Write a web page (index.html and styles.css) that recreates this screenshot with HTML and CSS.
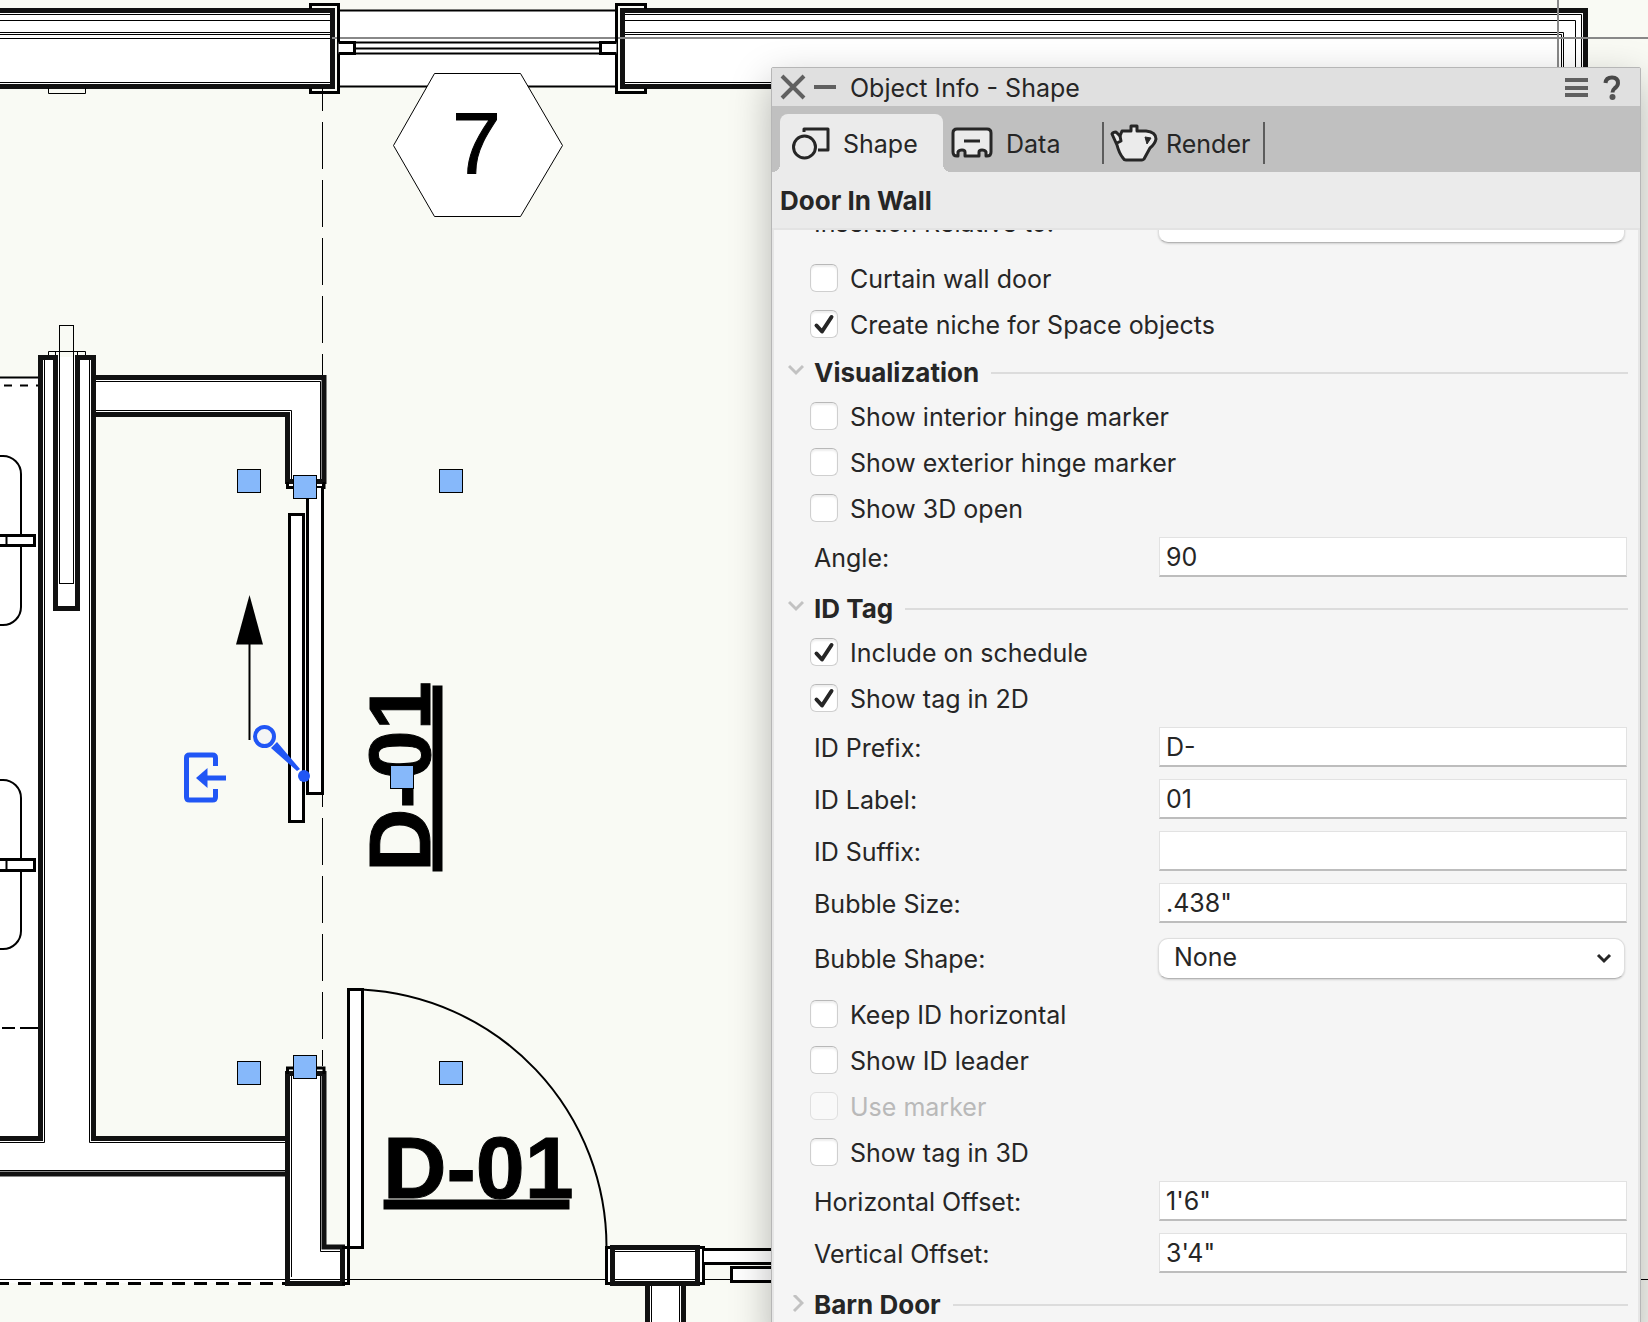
FILE: index.html
```html
<!DOCTYPE html>
<html lang="en">
<head>
<meta charset="utf-8">
<title>Object Info - Shape</title>
<link rel="stylesheet" href="styles.css">
</head>
<body>
<main class="workspace">
  <svg class="plan" role="img" aria-label="Floor plan">
    <!-- room and wall fills -->
    <g class="fill">
      <path d="M0 10H332V87H0zM340 10H617V87H340zM623 10H1586V87H623zM1559 38H1586V400H1559z"/>
      <path d="M0 377H40V357H93V377H324V488H288V414H93V1138H288V1074H324V1247H348V1283H0z"/>
      <path d="M607 1248H704V1283H607zM648 1283H683V1322H648zM704 1249H800V1264H704zM732 1267H800V1281H732z"/>
    </g>
    <!-- interior of the room -->
    <path class="paper" d="M94 415H288V1138H94z"/>

    <!-- upper wall -->
    <path class="thin" d="M0 14.5H332M0 20.5H332M0 32.5H332M0 34.5H332M0 38.5H332M0 82.5H332"/>
    <path class="thin" d="M623 14.5H1581.5V400M623 20.5H1575.5V400M623 32.5H1563.5V400M623 34.5H1561.5V400M623 38.5H1558.5V400M623 82.5H800"/>
    <path class="wall" d="M0 10.5H332.5V86.5H0M800 86.5H622.5V10.5H1585.5V400"/>
    <path class="mid" d="M340 10.5H617M340 86.5H617M355 42.5H600M355 48.5H600M355 53.5H600"/>
    <path class="guide" d="M332 38H1648M1558 0V80"/>
    <path class="frame" d="M310.5 9V4.5H338.5V92.5H310.5V88M645.5 9V4.5H616.5V92.5H645.5V88"/>
    <path class="frame white" d="M338.5 42.5H354.5V53.5H338.5M616.5 42.5H600.5V53.5H616.5"/>
    <path class="thin" d="M48.5 88V93.5H85.5V88"/>
    <path class="thin dash-long" d="M322.5 88V1066"/>

    <!-- window tag -->
    <path class="thin white" d="M393.5 145.5L434.5 73.5H520.5L562.5 145.5L520.5 216.5H434.5z"/>
    <text class="tag light" x="452" y="174">7</text>

    <!-- washroom fixtures -->
    <path class="mid" d="M0 377.5H40M-2 456H3A18 18 0 0 1 21 474V607A18 18 0 0 1 3 625H-2M-2 780H3A18 18 0 0 1 21 798V931A18 18 0 0 1 3 949H-2"/>
    <path class="mid" d="M4 385.5H12M20 385.5H28M36 385.5H40M2 1028H15M20 1028H25M24 1028H40"/>
    <path class="frame white" d="M-2 535.5H34.5V545.5H-2M-2 859.5H34.5V870.5H-2"/>
    <path class="mid" d="M6.5 535V546M6.5 859V871"/>

    <!-- pocket wall and its corner -->
    <path class="thin" d="M48.5 357V351.5H85.5V357M55.5 351V357M77.5 351V357"/>
    <path class="thin" d="M44.5 359V1142.5H0M89.5 359V1142.5H287M0 1170.5H287"/>
    <path class="thin" d="M95 381.5H320.5V480M95 410.5H291.5V480"/>
    <path class="wall" d="M0 1138.5H40.5V357.5H55.5V608.5H77.5V357.5H93.5V1138.5H287M0 1174H287"/>
    <path class="wall" d="M93.5 377.5H324V481.5H287.5V414.5H93.5"/>
    <path class="frame" d="M287.5 482V487.5H324V482"/>
    <rect class="thin none" x="59.5" y="325.5" width="14" height="258"/>

    <!-- lower wall -->
    <path class="thin" d="M0 1279.5H348M291.5 1076V1277M320.5 1076V1251.5H342M348 1279.5H800M1636 1279.5H1648"/>
    <path class="frame dash-short" d="M-4 1283.5H287"/>
    <path class="mid dash-short" d="M286 1179V1283"/>
    <path class="wall" d="M287.5 1073.5H324V1247H342.5V1283.5H287.5z"/>
    <path class="frame" d="M287.5 1074V1068H324V1074M342 1247.5H348.5V1283.5H342"/>
    <path class="mid" d="M362 989.5A258 258 0 0 1 606.5 1247.5"/>
    <rect class="frame white" x="348.5" y="989.5" width="14" height="258"/>
    <rect class="frame white" x="606.5" y="1247.5" width="97" height="36"/>
    <path class="thin" d="M612 1251.5H697M612 1279.5H697M651.5 1285V1400M679.5 1285V1400"/>
    <path class="wall" d="M612.5 1247.5V1283.5H697.5V1247.5zM647.5 1285V1400M683.5 1285V1400"/>
    <path class="frame white" d="M704 1249.5H800V1263.5H704"/>
    <rect class="frame white" x="731.5" y="1267.5" width="90" height="14"/>

    <!-- sliding door and direction arrow -->
    <rect class="frame white" x="289.5" y="514.5" width="14" height="307"/>
    <path class="frame white" d="M307.5 488V793.5H322.5V488"/>
    <path class="mid" d="M249.5 740V640"/>
    <path d="M249.5 595L263 644.5H236z"/>

    <!-- door tags -->
    <text class="tag bold" x="383" y="1198">D-01</text>
    <rect x="383.500" y="1199.500" width="186" height="10"/>
    <text class="tag bold" transform="translate(430 872) rotate(-90)">D-01</text>
    <rect x="432.500" y="685.500" width="10" height="186"/>

    <!-- selection handles -->
    <g class="handle">
      <rect x="237.5" y="469.5" width="23" height="23"/>
      <rect x="293.5" y="475.5" width="23" height="23"/>
      <rect x="439.5" y="469.5" width="23" height="23"/>
      <rect x="390.5" y="765.5" width="23" height="23"/>
      <rect x="237.5" y="1061.5" width="23" height="23"/>
      <rect x="293.5" y="1055.5" width="23" height="23"/>
      <rect x="439.5" y="1061.5" width="23" height="23"/>
    </g>
    <g class="marker">
      <path class="line" d="M215.5 766V758Q215.500 755 212.500 755H189.500Q186.500 755 186.500 758V797Q186.500 800 189.500 800H212.500Q215.500 800 215.500 797V789M205 778H226"/>
      <path d="M196 778L207.500 768V788z"/>
      <path d="M277 742L300 769L297 771L271 748z"/>
      <circle class="ring" cx="264.500" cy="736.500" r="9.500"/>
      <circle cx="304" cy="776" r="6"/>
    </g>
  </svg>

  <section class="palette" aria-label="Object Info">
    <header class="titlebar">
      <button class="icon-button" aria-label="Close"><svg width="26" height="26" viewBox="0 0 26 26"><path d="M2 2L24 24M24 2L2 24"/></svg></button>
      <button class="icon-button" aria-label="Minimize"><svg width="22" height="26" viewBox="0 0 22 26"><path d="M0 13H22"/></svg></button>
      <h1 class="title">Object Info - Shape</h1>
      <button class="icon-button" aria-label="Menu"><svg width="23" height="26" viewBox="0 0 23 26"><path d="M0 6H23M0 14H23M0 21H23"/></svg></button>
      <button class="icon-button" aria-label="Help"><svg width="18" height="26" viewBox="0 0 18 26"><path class="query" d="M2.500 9Q3 3.500 9 3.500Q15 3.500 15 9Q15 12 11.500 14.500Q9.500 16 9.500 18.500"/><circle cx="9.500" cy="23" r="3"/></svg></button>
    </header>

    <nav class="tabs">
      <button class="tab active">
        <svg width="38" height="34" viewBox="0 0 38 34"><path d="M12 6V3H36V24H26"/><circle cx="12.500" cy="21" r="11"/></svg>
        <span>Shape</span>
      </button>
      <button class="tab">
        <svg width="42" height="34" viewBox="0 0 42 34"><path class="light" d="M6 3H36Q40 3 40 7V26Q40 30 36 30H35V26Q34 24 31 24Q28 24 28 26V30H14V26Q14 24 11 24Q8 24 7 26V30H6Q2 30 2 26V7Q2 3 6 3z"/><path d="M13 15H29"/></svg>
        <span>Data</span>
      </button>
      <button class="tab">
        <svg width="48" height="40" viewBox="0 0 48 40"><path class="light" d="M12 8H21V3H27V8H36Q46 9 46 16Q45 21 40 25L34 36Q33 37 32 37H16Q14 37 13 35Q9 30 7 22L2 11Q3 9 6 9L10 13z"/><path d="M10 13L11 18L7 20"/><path class="solid" d="M35 14L41 15L37 21z"/></svg>
        <span>Render</span>
      </button>
    </nav>

    <h2 class="object-type">Door In Wall</h2>

    <form class="fields">
      <div class="row tall">
        <label for="insertion">Insertion Relative to:</label>
        <select id="insertion"><option>Center of Frame</option></select>
      </div>
      <label class="check"><input type="checkbox"><span>Curtain wall door</span></label>
      <label class="check"><input type="checkbox" checked><span>Create niche for Space objects</span></label>

      <h3 class="section"><button type="button" aria-expanded="true"><svg width="16" height="20" viewBox="0 0 16 20"><path d="M1 3L8 10L15 3"/></svg>Visualization</button></h3>
      <label class="check"><input type="checkbox"><span>Show interior hinge marker</span></label>
      <label class="check"><input type="checkbox"><span>Show exterior hinge marker</span></label>
      <label class="check"><input type="checkbox"><span>Show 3D open</span></label>
      <div class="row"><label for="angle">Angle:</label><input id="angle" type="text" value="90"></div>

      <h3 class="section"><button type="button" aria-expanded="true"><svg width="16" height="20" viewBox="0 0 16 20"><path d="M1 3L8 10L15 3"/></svg>ID Tag</button></h3>
      <label class="check"><input type="checkbox" checked><span>Include on schedule</span></label>
      <label class="check"><input type="checkbox" checked><span>Show tag in 2D</span></label>
      <div class="row"><label for="prefix">ID Prefix:</label><input id="prefix" type="text" value="D-"></div>
      <div class="row"><label for="idlabel">ID Label:</label><input id="idlabel" type="text" value="01"></div>
      <div class="row"><label for="suffix">ID Suffix:</label><input id="suffix" type="text" value=""></div>
      <div class="row"><label for="bubble-size">Bubble Size:</label><input id="bubble-size" type="text" value=".438&quot;"></div>
      <div class="row tall">
        <label for="bubble-shape">Bubble Shape:</label>
        <select id="bubble-shape"><option>None</option></select>
      </div>
      <label class="check"><input type="checkbox"><span>Keep ID horizontal</span></label>
      <label class="check"><input type="checkbox"><span>Show ID leader</span></label>
      <label class="check disabled"><input type="checkbox" disabled><span>Use marker</span></label>
      <label class="check"><input type="checkbox"><span>Show tag in 3D</span></label>
      <div class="row"><label for="h-offset">Horizontal Offset:</label><input id="h-offset" type="text" value="1'6&quot;"></div>
      <div class="row"><label for="v-offset">Vertical Offset:</label><input id="v-offset" type="text" value="3'4&quot;"></div>

      <h3 class="section"><button type="button" aria-expanded="false"><svg width="16" height="20" viewBox="0 0 16 20"><path d="M6 0L14 8L6 16"/></svg>Barn Door</button></h3>
    </form>
  </section>
</main>
</body>
</html>
```

FILE: styles.css
```css
* {
  box-sizing: border-box;
}

body {
  margin: 0;
  font-family: Inter, "Liberation Sans", sans-serif;
  font-size: 25px;
  line-height: 30px;
  color: #262626;
}

button,
input,
select {
  font: inherit;
  color: inherit;
}

button {
  border: 0;
  padding: 0;
  background: none;
}

h1,
h2,
h3 {
  margin: 0;
  font-size: inherit;
}

.workspace {
  position: relative;
  height: 100vh;
  overflow: hidden;
  background: #f9faf4;
}

/* Floor plan */
.plan {
  display: block;
  width: 100%;
  height: 100%;
}

.plan .fill {
  fill: #fff;
}

.plan .paper {
  fill: #f9faf4;
}

.plan .thin,
.plan .mid,
.plan .wall,
.plan .frame,
.plan .guide {
  fill: none;
  stroke: #000;
}

.plan .thin { stroke-width: 1; }
.plan .mid { stroke-width: 2; }
.plan .frame { stroke-width: 3; }
.plan .wall { stroke-width: 5; stroke: #111; }

.plan .guide {
  stroke: #888;
  stroke-width: 2;
}

.plan .white { fill: #fff; }

.plan .dash-long {
  stroke-dasharray: 47 11;
  stroke-dashoffset: 24;
}

.plan .dash-short { stroke-dasharray: 13 9; }

.plan .tag {
  font-family: "Liberation Sans", Arial, sans-serif;
  font-size: 88px;
}

.plan .light {
  stroke: #000;
  stroke-width: 1;
}

.plan .bold {
  font-weight: 700;
  stroke: #000;
  stroke-width: 1;
}

.plan .handle rect {
  fill: #86b8fa;
  stroke: #000;
}

.plan .marker { fill: #2156f5; }

.plan .marker .line {
  fill: none;
  stroke: #2156f5;
  stroke-width: 5;
}

.plan .marker .ring {
  fill: #f4f5f5;
  stroke: #2156f5;
  stroke-width: 4;
}

/* Floating palette */
.palette {
  position: absolute;
  top: 67px;
  left: 771px;
  right: 7px;
  bottom: -20px;
  display: flex;
  flex-direction: column;
  border: 1px solid #b6b6b6;
  border-radius: 2px 2px 0 0;
  background: #ebebeb;
  box-shadow: 0 14px 40px rgba(0, 0, 0, 0.28);
}

.titlebar {
  display: flex;
  align-items: center;
  height: 38px;
  padding: 0 19px 0 8px;
  gap: 8px;
  background: #e0e0e0;
}

.icon-button {
  display: flex;
}

.icon-button svg {
  fill: #555;
  stroke: #606060;
  stroke-width: 4;
}

.icon-button circle { stroke: none; }

.icon-button .query {
  fill: none;
  stroke: #484848;
}

.title {
  flex: 1;
  padding: 2px 0 0 6px;
  font-weight: 400;
}

.icon-button:last-child { margin-left: 7px; }

.tabs {
  display: flex;
  align-items: flex-end;
  height: 66px;
  padding: 0 8px;
  background: #c0c0c0;
}

.tab {
  position: relative;
  display: flex;
  align-items: center;
  gap: 13px;
  height: 58px;
  padding: 0 12px;
}

.tab span { padding-top: 2px; }

.tab svg {
  fill: none;
  stroke: #262626;
  stroke-width: 3;
  stroke-linejoin: round;
}

.tab .light { fill: #ebebeb; }
.tab .solid { fill: #262626; stroke-width: 1; }

.tab.active {
  width: 163px;
  border-radius: 8px 8px 0 0;
  background: #ebebeb;
}

.tab.active::before,
.tab.active::after {
  content: "";
  position: absolute;
  bottom: 0;
  width: 8px;
  height: 8px;
}

.tab.active::before {
  right: 100%;
  background: radial-gradient(circle at 0 0, #c0c0c0 8px, #ebebeb 8px);
}

.tab.active::after {
  left: 100%;
  background: radial-gradient(circle at 100% 0, #c0c0c0 8px, #ebebeb 8px);
}

.tab:nth-child(2) {
  width: 159px;
  padding: 0 8px;
}

.tab:nth-child(3) {
  gap: 8px;
  width: 163px;
  height: 42px;
  margin-bottom: 8px;
  padding: 0 6px;
  border: solid #5c5c5c;
  border-width: 0 2px;
}

.object-type {
  height: 58px;
  padding: 14px 8px;
  border-bottom: 2px solid #e3e3e3;
  font-size: 26px;
}

.fields {
  flex: 1;
  overflow: hidden;
  border: solid #e6e6e6;
  border-width: 0 2px;
  background: #f5f5f5;
}

.row {
  display: grid;
  grid-template-columns: 345px 1fr;
  align-items: center;
  height: 52px;
  padding: 0 11px 0 40px;
}

.row label,
.check span {
  padding-top: 2px;
}

.row.tall {
  height: 62px;
  padding-bottom: 4px;
}

.row.tall:first-child { margin-top: -37px; }

.row input {
  width: 100%;
  height: 40px;
  padding: 0 6px;
  border: 1px solid #e2e2e2;
  border-bottom: 2px solid #bdbdbd;
  border-radius: 0;
  background: #fff;
}

.row select {
  height: 41px;
  margin: 0 2px 0 -1px;
  padding: 0 15px 2px;
  border: 1px solid #dedede;
  border-bottom-color: #b4b4b4;
  border-radius: 10px;
  appearance: none;
  background: #fff url("data:image/svg+xml,%3Csvg xmlns='http://www.w3.org/2000/svg' width='16' height='12'%3E%3Cpath d='M2 3L8 9L14 3' fill='none' stroke='%23262626' stroke-width='3'/%3E%3C/svg%3E") no-repeat right 12px center;
  box-shadow: 0 1px 2px rgba(0, 0, 0, 0.15);
}

.check {
  display: flex;
  align-items: center;
  gap: 12px;
  height: 46px;
  padding-left: 36px;
}

.check input {
  width: 28px;
  height: 28px;
  margin: 0;
  border: 1px solid #cfcfcf;
  border-top-color: #b8b8b8;
  border-radius: 6px;
  appearance: none;
  background: #fff;
  box-shadow: inset 0 2px 2px rgba(0, 0, 0, 0.07);
}

.check input:checked {
  background: #fff url("data:image/svg+xml,%3Csvg xmlns='http://www.w3.org/2000/svg' width='26' height='26'%3E%3Cpath d='M5.500 14.500L11 20.500L20.500 6' fill='none' stroke='%23262626' stroke-width='4' stroke-linecap='round' stroke-linejoin='round'/%3E%3C/svg%3E") center;
}

.check.disabled { color: #b9b9b9; }

.check.disabled input {
  border-color: #dfdfdf;
  background: #f9f9f9;
  box-shadow: none;
}

.section {
  display: flex;
  align-items: center;
  gap: 12px;
  height: 46px;
  padding: 6px 10px 0 14px;
}

.section::after {
  content: "";
  flex: 1;
  height: 2px;
  background: #dcdcdc;
}

.section button {
  display: flex;
  align-items: center;
  gap: 10px;
  font-size: 26px;
  font-weight: 700;
}

.section svg {
  fill: none;
  stroke: #c2c2c2;
  stroke-width: 3;
}
```
